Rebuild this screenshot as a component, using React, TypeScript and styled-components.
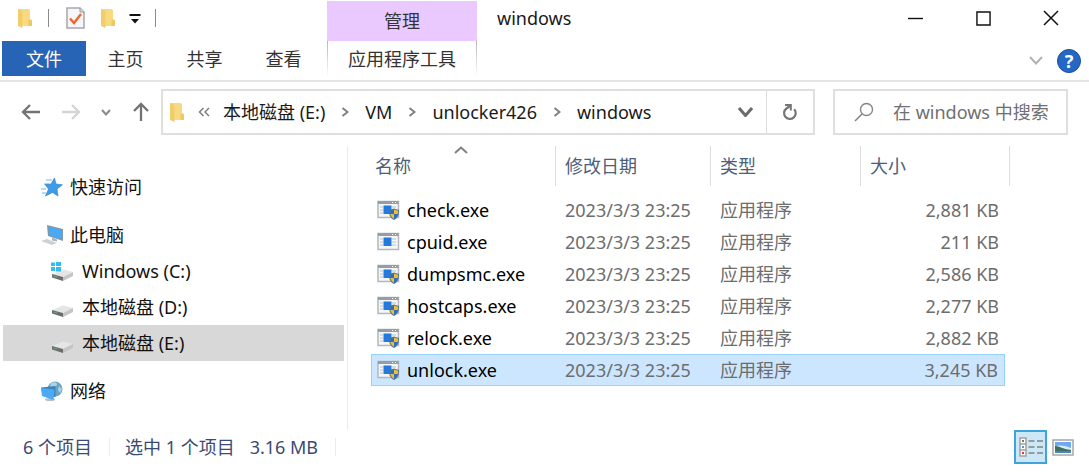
import React from "react";
import styled, { createGlobalStyle, css } from "styled-components";

const GlobalStyle = createGlobalStyle`
  * { box-sizing: border-box; }
  body {
    margin: 0;
    background: #fff;
    color: #1a1a1a;
    font: 18px/24px "Noto Sans", "Noto Sans CJK SC", sans-serif;
  }
  button, input {
    font: inherit;
    color: inherit;
    border: 0;
    padding: 0;
    background: none;
  }
`;

const Window = styled.div`
  display: flex;
  flex-direction: column;
`;

/* Title bar and ribbon tabs */

const Header = styled.header`
  display: grid;
  grid-template-columns: 325px 150px 1fr;
  grid-template-rows: 41px 39px;
  padding: 0 2px;
  border-bottom: 2px solid #e5e5e5;
`;

const QuickTools = styled.div`
  display: flex;
  align-items: center;
  height: 36px;
  padding-left: 6px;
`;

const QuickButton = styled.button<{ $width: number }>`
  display: flex;
  justify-content: center;
  width: ${(p) => p.$width}px;
`;

const QuickDivider = styled.span`
  width: 1px;
  height: 18px;
  margin: 0 6px;
  background: #8a8a8a;
`;

const ContextTitle = styled.div`
  margin-top: 1px;
  padding-top: 8px;
  background: #e9c9ff;
  color: #333;
  text-align: center;
`;

const TitleArea = styled.div`
  display: flex;
  align-items: center;
  height: 36px;
  padding: 0 2px 0 20px;
`;

const WindowTitle = styled.h1`
  flex: 1;
  margin: 0;
  font-size: 18px;
  font-weight: 400;
`;

const WindowButton = styled.button`
  display: flex;
  align-items: center;
  justify-content: center;
  width: 68px;
  height: 36px;
`;

const Tabs = styled.nav`
  display: flex;
`;

const Tab = styled.button<{ $primary?: boolean }>`
  width: ${(p) => (p.$primary ? 84 : 79)}px;
  height: 35px;
  color: ${(p) => (p.$primary ? "#fff" : "#333")};
  background: ${(p) => (p.$primary ? "#2764b5" : "transparent")};
`;

const ContextTab = styled.button`
  height: 35px;
  color: #333;
  border: solid;
  border-width: 0 1px;
  border-image: linear-gradient(#b4b4b4, #fff) 1;
`;

const RibbonTools = styled.div`
  display: flex;
  align-items: center;
  justify-content: flex-end;
  gap: 14px;
  height: 39px;
  padding-right: 6px;
`;

const IconButton = styled.button`
  display: flex;
  align-items: center;
  justify-content: center;
`;

const HelpButton = styled.button`
  width: 24px;
  height: 24px;
  border: 1px solid #174f9f;
  border-radius: 50%;
  background: #2468c4;
  color: #fff;
  font-size: 18px;
  font-weight: 700;
  line-height: 22px;
`;

/* Navigation row */

const NavigationBar = styled.div`
  display: flex;
  align-items: center;
  padding: 7px 21px 11px;
`;

const NavButtons = styled.div`
  display: flex;
  align-items: center;
  justify-content: space-between;
  width: 130px;
  margin-right: 10px;
`;

const AddressBox = styled.div`
  display: flex;
  flex: 1;
  height: 46px;
  border: 2px solid #dfdfdf;
`;

const Crumbs = styled.div`
  display: flex;
  flex: 1;
  align-items: center;
  gap: 16px;
  padding-left: 6px;
`;

const CrumbRoot = styled.span`
  display: flex;
  align-items: center;
  gap: 13px;
`;

const AddressButton = styled(IconButton)<{ $divided?: boolean }>`
  width: ${(p) => (p.$divided ? 47 : 42)}px;
  ${(p) => p.$divided && css`border-left: 1px solid #dcdcdc;`}
`;

const SearchBox = styled.label`
  display: flex;
  align-items: center;
  gap: 19px;
  width: 235px;
  height: 46px;
  margin-left: 18px;
  padding-left: 19px;
  border: 2px solid #dfdfdf;
`;

const SearchInput = styled.input`
  flex: 1;
  min-width: 0;
  outline: none;
  &::placeholder { color: #707070; opacity: 1; }
`;

/* Folder tree and file list */

const Body = styled.div`
  display: flex;
  min-height: 284px;
`;

const Sidebar = styled.nav`
  width: 348px;
  padding: 23px 3px 0;
  border-right: 1px solid #ececec;
`;

const TreeItem = styled.a<{ $nested?: boolean; $spaced?: boolean; $selected?: boolean }>`
  display: flex;
  align-items: center;
  gap: ${(p) => (p.$nested ? 9 : 7)}px;
  height: 36px;
  margin-top: ${(p) => (p.$spaced ? 12 : 0)}px;
  padding-left: ${(p) => (p.$nested ? 48 : 38)}px;
  color: #111;
  text-decoration: none;
  background: ${(p) => (p.$selected ? "#d8d8d8" : "transparent")};
`;

const FileArea = styled.main`
  flex: 1;
  padding-left: 23px;
`;

const FileTable = styled.table`
  width: 639px;
  table-layout: fixed;
  border-collapse: separate;
  border-spacing: 0;
`;

const Column = styled.col<{ $width: number }>`
  width: ${(p) => p.$width}px;
`;

const HeaderCell = styled.th<{ $inset?: number }>`
  height: 40px;
  padding: 0 0 0 ${(p) => p.$inset ?? 9}px;
  border-right: 1px solid #dedede;
  color: #4c607a;
  font-weight: 400;
  text-align: left;
  vertical-align: top;
`;

const SortSlot = styled.span`
  display: flex;
  justify-content: center;
  height: 8px;
  padding-right: 9px;
`;

const FileRows = styled.tbody`
  &::before {
    content: "";
    display: block;
    height: 8px;
  }
`;

const FileRow = styled.tr<{ $selected?: boolean }>`
  ${(p) =>
    p.$selected &&
    css`
      td {
        background: #cce6ff;
        border-block: 1px solid #99d1ff;
      }
      td:first-child { border-left: 1px solid #99d1ff; }
      td:last-child { border-right: 1px solid #99d1ff; }
    `}
`;

const Cell = styled.td<{ $right?: boolean }>`
  height: 32px;
  padding: 0 6px 0 9px;
  border: solid transparent;
  border-width: 1px 0;
  color: #6d6d6d;
  text-align: ${(p) => (p.$right ? "right" : "left")};
  white-space: nowrap;
`;

const NameCell = styled(Cell)`
  padding-left: 5px;
  border-left-width: 1px;
  color: #000;
`;

const FileName = styled.span`
  display: flex;
  align-items: center;
  gap: 7px;
`;

/* Status bar */

const StatusBar = styled.footer`
  display: flex;
  align-items: center;
  padding: 0 15px 9px 23px;
  color: #3b4a72;
`;

const StatusText = styled.span`
  display: flex;
  gap: 15px;
  padding-right: 17px;
  margin-right: 15px;
  border-right: 1px solid #ececec;
  line-height: 18px;
`;

const ViewButtons = styled.div`
  display: flex;
  gap: 5px;
  margin-left: auto;
`;

const ViewButton = styled(IconButton)<{ $active?: boolean }>`
  width: ${(p) => (p.$active ? 33 : 22)}px;
  height: 34px;
  ${(p) =>
    p.$active &&
    css`
      background: #cce8f6;
      border: 2px solid #3fa3dc;
    `}
`;

/* Icons */

const FolderIcon = () => (
  <svg width="16" height="20" viewBox="0 0 16 20" aria-hidden="true">
    <path d="M1 1h10.500q1.500 0 1.500 1.500V11l2 1v6H4z" fill="#f8da80" />
    <path d="M11.500 11.500l3.500 1v5.500h-3.500z" fill="#f0c860" />
    <path d="M1 1l3.500 1.500q1 .500 1 1.500v16L1 18z" fill="#f1cd6c" />
  </svg>
);

const PropertiesIcon = () => (
  <svg width="19" height="22" viewBox="0 0 19 22" aria-hidden="true">
    <path d="M1 1h13l4 4v16H1z" fill="#f6f6f8" stroke="#a8a8ac" strokeWidth="1.500" />
    <path d="M14 1v4h4" fill="#ddd" stroke="#999" />
    <path d="M4 11.500l4 4.500 7-9" fill="none" stroke="#ea6a35" strokeWidth="2.500" />
  </svg>
);

const CustomizeIcon = () => (
  <svg width="12" height="12" viewBox="0 0 12 12" aria-hidden="true">
    <path d="M0.500 2h11v2H0.500zM2 7h8l-4 4.500z" fill="#111" />
  </svg>
);

type ChevronProps = { dir: "down" | "right" | "up"; w: number; h: number; color: string; weight?: number };

const Chevron = ({ dir, w, h, color, weight = 2 }: ChevronProps) => {
  const d = {
    down: `M1 1L${w / 2} ${h - 1.5}L${w - 1} 1`,
    up: `M1 ${h - 1}L${w / 2} 1.5L${w - 1} ${h - 1}`,
    right: `M1.5 1L${w - 1.5} ${h / 2}L1.5 ${h - 1}`,
  }[dir];
  return (
    <svg width={w} height={h} viewBox={`0 0 ${w} ${h}`} aria-hidden="true">
      <path d={d} fill="none" stroke={color} strokeWidth={weight} />
    </svg>
  );
};

const ArrowIcon = ({ dir, color }: { dir: "left" | "right" | "up"; color: string }) => (
  <svg width="20" height="20" viewBox="0 0 20 20" aria-hidden="true">
    <path
      d="M19 10H2M9 3L2 10l7 7"
      fill="none"
      stroke={color}
      strokeWidth="2.300"
      transform={`rotate(${{ left: 0, up: 90, right: 180 }[dir]} 10 10)`}
    />
  </svg>
);

const RefreshIcon = () => (
  <svg width="16" height="18" viewBox="0 0 16 18" aria-hidden="true">
    <path d="M12.200 6.300A5.800 5.800 0 1 1 4.500 5.500L8 3" fill="none" stroke="#757575" strokeWidth="2.200" />
    <path d="M3 2h5.800v5.500" fill="none" stroke="#757575" strokeWidth="2" />
  </svg>
);

const SearchIcon = () => (
  <svg width="20" height="20" viewBox="0 0 20 20" aria-hidden="true">
    <circle cx="12.500" cy="7.500" r="6" fill="none" stroke="#85858d" strokeWidth="1.400" />
    <path d="M8 12L1 19" stroke="#85858d" strokeWidth="1.600" />
  </svg>
);

const StarIcon = () => (
  <svg width="22" height="20" viewBox="0 0 22 20" aria-hidden="true">
    <path d="M5 3h6M3 7h5M0 12h5M1 16h4" stroke="#9dcff5" strokeWidth="1.500" />
    <path d="M13.500 1l1.500 6 6.500 .800-5.500 4.200 1 7-5.500-3.500-7 3.500 3-7L4 7.500l6-.500z" fill="#3d9be9" stroke="#2f7fc8" strokeWidth="0.600" />
  </svg>
);

const ComputerIcon = () => (
  <svg width="22" height="20" viewBox="0 0 22 20" aria-hidden="true">
    <path d="M6 0l16 4v12L7 11z" fill="#8198a8" />
    <path d="M7.500 1.500L20.500 5v9L8.500 10.300z" fill="#49a9f5" />
    <path d="M11 12.500l5 2v2l-5-1z" fill="#aab3b9" />
    <path d="M0 16l6-2 10 4-5 2z" fill="#cdd1d4" />
  </svg>
);

const DriveIcon = ({ system }: { system?: boolean }) => (
  <svg width="22" height="20" viewBox="0 0 22 20" aria-hidden="true">
    <path d="M1 13l11-4.500L22 11l-10 5z" fill="#e4e5e6" />
    <path d="M1 13l11 3v4L1 16.500z" fill="#6a6e6b" />
    <path d="M12 16l10-5v4l-10 5z" fill="#c3c5c7" />
    <path d="M2.500 15l4 1.300" stroke="#6fa578" strokeWidth="1.200" />
    {system && (
      <path d="M0 1.500h4V5H0zM5 1h5v4H5zM0 6h4v4H0zM5 6h5v4.500H5z" fill="#35bbf3" />
    )}
  </svg>
);

const NetworkIcon = () => (
  <svg width="22" height="20" viewBox="0 0 22 20" aria-hidden="true">
    <circle cx="14" cy="8" r="7.500" fill="#6ba5c6" />
    <path d="M10 2c4-2 7 0 6 2s-4 2-7 2zM18 5l3 3-2 4-2-3z" fill="#a9d5e0" />
    <ellipse cx="9" cy="18.500" rx="5" ry="1.500" fill="#b9c0c4" />
    <path d="M0 6.500L14.500 5v11L2 15z" fill="#3e82bc" />
    <path d="M0 7l13.500 1.500L12.500 19 1 15z" fill="#49aaf6" />
  </svg>
);

const AppIcon = ({ shield }: { shield?: boolean }) => (
  <svg width="23" height="20" viewBox="0 0 23 20" aria-hidden="true">
    <path d="M1 1.500h20.500v16H1z" fill="#f4f6f7" stroke="#b3b8bb" strokeWidth="1.500" />
    <path d="M1 1h20.500v3H1z" fill="#979ea2" />
    <path d="M15 2.500h1M18 2.500h1" stroke="#fff" />
    <path d="M3 7h3M3 10h3M3 13h3M15 7h4M15 10h4M15 13h4" stroke="#bac2c8" />
    <path d="M6.500 5.500h8v8.500h-8z" fill="#2479dc" />
    {shield && (
      <>
        <path d="M17 8.500l5 1.500c0 5-1 8-5 10-4-2-5-5-5-10z" fill="#5b7688" />
        <path d="M17 9.500l-4 1.300q0 2 .500 3.200H17zM17 14h3.800q-1 3.500-3.800 5z" fill="#2f6fb4" />
        <path d="M17 9.500l4 1.300q0 2-.300 3.200H17zM17 14h-3.700q1 3.500 3.700 5z" fill="#f0bb42" />
      </>
    )}
  </svg>
);

const DetailsIcon = () => (
  <svg width="26" height="22" viewBox="0 0 26 22" aria-hidden="true">
    <path d="M2 2h6v18H2zM2 8h6M2 14h6" fill="#fff" stroke="#a5a0a0" strokeWidth="1.500" />
    <path d="M4 5h2" stroke="#777" strokeWidth="2" />
    <path d="M4 11h2" stroke="#5a8ee8" strokeWidth="2" />
    <path d="M4 17h2" stroke="#d33" strokeWidth="2" />
    <path d="M10.500 5h6M19 5h6M10.500 11h6M19 11h6M10.500 17h6M19 17h6" stroke="#7f8487" strokeWidth="1.500" />
  </svg>
);

const PictureIcon = () => (
  <svg width="22" height="17" viewBox="0 0 22 17" aria-hidden="true">
    <path d="M1 1h20v15H1z" fill="#fff" stroke="#a6a6a6" strokeWidth="1.500" />
    <path d="M3 3h16v11H3z" fill="#6fa8f2" />
    <path d="M3 8c4-2 7-2 16 1v2H3z" fill="#d8eaf5" />
    <path d="M3 7c5 0 7 3 16 4v1H3z" fill="#3f6f62" />
    <path d="M3 12h16v2H3z" fill="#4b85b8" />
  </svg>
);

/* Data */

const crumbs = ["本地磁盘 (E:)", "VM", "unlocker426", "windows"];

const files = [
  { name: "check.exe", size: "2,881 KB", shield: true },
  { name: "cpuid.exe", size: "211 KB", shield: false },
  { name: "dumpsmc.exe", size: "2,586 KB", shield: true },
  { name: "hostcaps.exe", size: "2,277 KB", shield: true },
  { name: "relock.exe", size: "2,882 KB", shield: true },
  { name: "unlock.exe", size: "3,245 KB", shield: true },
];

const tree = [
  { label: "快速访问", icon: <StarIcon /> },
  { label: "此电脑", icon: <ComputerIcon />, spaced: true },
  { label: "Windows (C:)", icon: <DriveIcon system />, nested: true },
  { label: "本地磁盘 (D:)", icon: <DriveIcon />, nested: true },
  { label: "本地磁盘 (E:)", icon: <DriveIcon />, nested: true, selected: true },
  { label: "网络", icon: <NetworkIcon />, spaced: true },
];

export default function App() {
  return (
    <Window>
      <GlobalStyle />
      <Header>
        <QuickTools>
          <QuickButton $width={34} aria-label="文件夹"><FolderIcon /></QuickButton>
          <QuickDivider />
          <QuickButton $width={40} aria-label="属性"><PropertiesIcon /></QuickButton>
          <QuickButton $width={26} aria-label="新建文件夹"><FolderIcon /></QuickButton>
          <QuickButton $width={28} aria-label="自定义"><CustomizeIcon /></QuickButton>
          <QuickDivider />
        </QuickTools>
        <ContextTitle>管理</ContextTitle>
        <TitleArea>
          <WindowTitle>windows</WindowTitle>
          <WindowButton aria-label="最小化">
            <svg width="15" height="15" viewBox="0 0 16 16"><path d="M0 8h16" stroke="#111" strokeWidth="1.500" /></svg>
          </WindowButton>
          <WindowButton aria-label="最大化">
            <svg width="15" height="15" viewBox="0 0 16 16"><path d="M1 1h14v14H1z" fill="none" stroke="#111" strokeWidth="1.500" /></svg>
          </WindowButton>
          <WindowButton aria-label="关闭">
            <svg width="16" height="16" viewBox="0 0 16 16"><path d="M1 1l14 14M15 1L1 15" stroke="#111" strokeWidth="1.500" /></svg>
          </WindowButton>
        </TitleArea>
        <Tabs>
          <Tab $primary>文件</Tab>
          <Tab>主页</Tab>
          <Tab>共享</Tab>
          <Tab>查看</Tab>
        </Tabs>
        <ContextTab>应用程序工具</ContextTab>
        <RibbonTools>
          <IconButton aria-label="展开功能区"><Chevron dir="down" w={14} h={9} color="#b2b2b2" /></IconButton>
          <HelpButton aria-label="帮助">?</HelpButton>
        </RibbonTools>
      </Header>

      <NavigationBar>
        <NavButtons>
          <IconButton aria-label="后退"><ArrowIcon dir="left" color="#737373" /></IconButton>
          <IconButton aria-label="前进"><ArrowIcon dir="right" color="#d5d5d5" /></IconButton>
          <IconButton aria-label="最近位置"><Chevron dir="down" w={10} h={7} color="#8a8a8a" /></IconButton>
          <IconButton aria-label="向上"><ArrowIcon dir="up" color="#737373" /></IconButton>
        </NavButtons>
        <AddressBox>
          <Crumbs>
            <CrumbRoot>
              <FolderIcon />
              <svg width="12" height="10" viewBox="0 0 12 10" aria-hidden="true">
                <path d="M5.500 1L1.500 5l4 4M11 1L7 5l4 4" fill="none" stroke="#777" strokeWidth="1.400" />
              </svg>
              <button>{crumbs[0]}</button>
            </CrumbRoot>
            {crumbs.slice(1).map((name) => (
              <React.Fragment key={name}>
                <Chevron dir="right" w={8} h={10} color="#808080" />
                <button>{name}</button>
              </React.Fragment>
            ))}
          </Crumbs>
          <AddressButton aria-label="以前的位置"><Chevron dir="down" w={15} h={10} color="#6c6c6c" weight={3} /></AddressButton>
          <AddressButton $divided aria-label="刷新"><RefreshIcon /></AddressButton>
        </AddressBox>
        <SearchBox>
          <SearchIcon />
          <SearchInput type="text" aria-label="搜索" placeholder="在 windows 中搜索" />
        </SearchBox>
      </NavigationBar>

      <Body>
        <Sidebar>
          {tree.map((item) => (
            <TreeItem key={item.label} href="#" $nested={item.nested} $spaced={item.spaced} $selected={item.selected}>
              {item.icon}
              {item.label}
            </TreeItem>
          ))}
        </Sidebar>
        <FileArea>
          <FileTable>
            <colgroup>
              <Column $width={185} />
              <Column $width={155} />
              <Column $width={150} />
              <Column $width={144} />
              <Column $width={5} />
            </colgroup>
            <thead>
              <tr>
                <HeaderCell $inset={4}>
                  <SortSlot><Chevron dir="up" w={14} h={8} color="#808080" /></SortSlot>
                  名称
                </HeaderCell>
                <HeaderCell><SortSlot />修改日期</HeaderCell>
                <HeaderCell><SortSlot />类型</HeaderCell>
                <HeaderCell colSpan={2}><SortSlot />大小</HeaderCell>
              </tr>
            </thead>
            <FileRows>
              {files.map((file) => (
                <FileRow key={file.name} $selected={file.name === "unlock.exe"}>
                  <NameCell>
                    <FileName><AppIcon shield={file.shield} />{file.name}</FileName>
                  </NameCell>
                  <Cell>2023/3/3 23:25</Cell>
                  <Cell>应用程序</Cell>
                  <Cell $right>{file.size}</Cell>
                </FileRow>
              ))}
            </FileRows>
          </FileTable>
        </FileArea>
      </Body>

      <StatusBar>
        <StatusText>6 个项目</StatusText>
        <StatusText><span>选中 1 个项目</span><span>3.16 MB</span></StatusText>
        <ViewButtons>
          <ViewButton $active aria-label="详细信息"><DetailsIcon /></ViewButton>
          <ViewButton aria-label="大图标"><PictureIcon /></ViewButton>
        </ViewButtons>
      </StatusBar>
    </Window>
  );
}
